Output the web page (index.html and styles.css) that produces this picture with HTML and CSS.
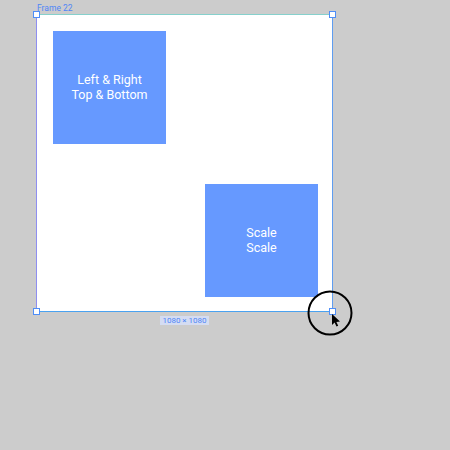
FILE: index.html
```
<!DOCTYPE html>
<html>
<head>
<meta charset="utf-8">
<link rel="stylesheet" href="styles.css">
</head>
<body>
<div class="canvas">
  <div class="frame-wrap">
    <div class="frame-label">Frame 22</div>
    <div class="frame">
      <div class="box box-a"><span>Left &amp; Right</span><span>Top &amp; Bottom</span></div>
      <div class="box box-b"><span>Scale</span><span>Scale</span></div>
      <i class="handle h-tl"></i>
      <i class="handle h-tr"></i>
      <i class="handle h-bl"></i>
      <i class="handle h-br"></i>
    </div>
    <div class="dims"><span>1080 × 1080</span></div>
    <svg class="cursor" width="50" height="50" viewBox="0 0 50 50">
      <circle cx="25" cy="25" r="21.5" fill="none" stroke="#000" stroke-width="2"/>
      <path d="M27 26 L27 37 L29.6 34.6 L31.5 38.5 L33.2 37.7 L31.4 33.9 L35 33.6 Z" fill="#000"/>
    </svg>
  </div>
</div>
</body>
</html>
```
FILE: styles.css
```
html, body {
  margin: 0;
  padding: 0;
  background: #cccccc;
  font-family: Roboto, "Liberation Sans", sans-serif;
}
.canvas {
  width: 450px;
  height: 450px;
  padding: 4px 0 0 36px;
  box-sizing: border-box;
}
.frame-wrap {
  position: relative;
  width: 297px;
}
.frame-label {
  height: 10px;
  font-size: 8.5px;
  line-height: 8px;
  color: #4f86f7;
  padding-left: 1px;
}
.frame {
  position: relative;
  width: 297px;
  height: 298px;
  box-sizing: border-box;
  background: #ffffff;
  border-top: 1px solid #86d0cc;
  border-left: 1px solid #8e8ef0;
  border-right: 1px solid #5f9df0;
  border-bottom: 1px solid #4aa2f0;
  padding: 16px 14px 14px 16px;
  display: flex;
  flex-direction: column;
  justify-content: space-between;
}
.box {
  width: 113px;
  height: 113px;
  background: #6699ff;
  color: #ffffff;
  font-size: 12.5px;
  line-height: 15px;
  display: flex;
  flex-direction: column;
  align-items: center;
  justify-content: center;
  padding-bottom: 1px;
  box-sizing: border-box;
}
.box-a { align-self: flex-start; }
.box-b { align-self: flex-end; }
.handle {
  position: absolute;
  width: 5px;
  height: 5px;
  background: #ffffff;
  border: 1px solid #4f8ef7;
}
.h-tl { left: -4px; top: -4px; }
.h-tr { right: -4px; top: -4px; }
.h-bl { left: -4px; bottom: -4px; }
.h-br { right: -4px; bottom: -4px; }
.dims {
  display: flex;
  justify-content: center;
  margin-top: 4px;
}
.dims span {
  font-size: 8px;
  line-height: 9px;
  color: #4f86f7;
  background: #d4dcf2;
  padding: 0 2px;
}
.cursor {
  position: absolute;
  left: 269px;
  top: 284px;
}
```
